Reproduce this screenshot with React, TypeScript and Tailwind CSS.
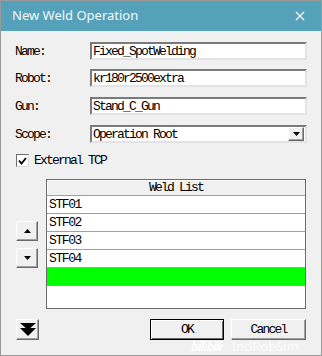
import React from 'react';

const mono = { fontFamily: '"Liberation Mono", "Noto Sans CJK SC", monospace' };

const sunken =
  'border-2 border-t-[#7a7a7a] border-l-[#7a7a7a] border-r-[#e3e3e3] border-b-[#e3e3e3] bg-white';
const raised =
  'border border-t-white border-l-white border-r-[#696969] border-b-[#696969] shadow-[inset_-1px_-1px_0_#a0a0a0] bg-[#f0f0f0]';
const txt = 'text-[13px] tracking-[-1.8px] text-black leading-none';

function Field({ label, value, className }: { label: string; value: string; className?: string }) {
  return (
    <div className={'flex items-center h-[18px] ' + (className || '')}>
      <span className={'w-[75px] ' + txt}>{label}</span>
      <div className={sunken + ' w-[217px] h-[18px] flex items-center pl-[1px] ' + txt}>{value}</div>
    </div>
  );
}

function Tri({ dir }: { dir: 'up' | 'down' }) {
  return (
    <svg width="7" height="4" viewBox="0 0 7 4">
      {dir === 'up' ? <polygon points="3.5,0 7,4 0,4" fill="#000" /> : <polygon points="0,0 7,0 3.5,4" fill="#000" />}
    </svg>
  );
}

export default function App() {
  const rows = ['STF01', 'STF02', 'STF03', 'STF04'];
  return (
    <div
      className="w-[322px] h-[356px] bg-[#f0f0f0] border border-[#9a9a9a] relative overflow-hidden flex flex-col"
      style={mono}
    >
      {/* title bar */}
      <div className="h-[30px] bg-[#55a1b9] flex items-center justify-between pl-[11px] pr-[16px] shrink-0">
        <span className="text-[13px] text-[#f4f8fa]" style={{ fontFamily: '"Noto Sans", "Open Sans", sans-serif' }}>
          New Weld Operation
        </span>
        <svg width="10" height="10" viewBox="0 0 10 10">
          <path d="M1 1 L9 9 M9 1 L1 9" stroke="#fff" strokeWidth="1.3" />
        </svg>
      </div>

      <div className="flex flex-col pl-[14px] pt-[11px]">
        <Field label="Name:" value="Fixed_SpotWelding" />
        <Field label="Robot:" value="kr180r2500extra" className="mt-[9px]" />
        <Field label="Gun:" value="Stand_C_Gun" className="mt-[10px]" />

        <div className="flex items-center h-[18px] mt-[10px]">
          <span className={'w-[75px] ' + txt}>Scope:</span>
          <div className={sunken + ' w-[217px] h-[18px] flex items-center justify-between pl-[1px] ' + txt}>
            <span>Operation Root</span>
            <div className={raised + ' w-[16px] h-[14px] flex items-center justify-center mr-[1px]'}>
              <Tri dir="down" />
            </div>
          </div>
        </div>

        <div className="flex items-center mt-[11px] ml-[1px] h-[13px]">
          <div className="w-[13px] h-[13px] bg-white border border-t-[#6d6d6d] border-l-[#6d6d6d] border-r-[#dcdcdc] border-b-[#dcdcdc] flex items-center justify-center">
            <svg width="9" height="8" viewBox="0 0 9 8">
              <path d="M1 3.5 L3.5 6.5 L8 1" stroke="#000" strokeWidth="1.8" fill="none" />
            </svg>
          </div>
          <span className={'ml-[5px] ' + txt}>External TCP</span>
        </div>

        {/* list area */}
        <div className="flex mt-[12px]">
          <div className="w-[31px] flex flex-col pl-[1px] pt-[42px] gap-[7px]">
            <div className={raised + ' w-[22px] h-[20px] flex items-center justify-center'}>
              <Tri dir="up" />
            </div>
            <div className={raised + ' w-[22px] h-[20px] flex items-center justify-center'}>
              <Tri dir="down" />
            </div>
          </div>
          <div className="w-[260px] h-[130px] border border-[#6b6b6b] bg-white flex flex-col">
            <div className={'h-[16px] border-b border-[#a0a0a0] bg-[#f0f0f0] shadow-[inset_1px_1px_0_#fff] flex items-center justify-center ' + txt}>
              Weld List
            </div>
            {rows.map((r) => (
              <div
                key={r}
                className="h-[18px] border-b border-[#a0a0a0] flex items-center pl-[2px] text-[13px] tracking-[-1.4px] leading-none"
              >
                {r}
              </div>
            ))}
            <div className="h-[18px] border-b border-[#a0a0a0] bg-[#00ff00]" />
          </div>
        </div>

        {/* bottom buttons */}
        <div className="flex items-center mt-[10px] pl-[1px]">
          <div className={raised + ' w-[23px] h-[21px] flex items-center justify-center'}>
            <svg width="16" height="13" viewBox="0 0 16 13">
              <polygon points="0,0 16,0 8,7" fill="#000" />
              <polygon points="0,5 16,5 8,13" fill="#000" />
            </svg>
          </div>
          <button className={'ml-[111px] w-[74px] h-[21px] border border-black bg-[#f0f0f0] shadow-[inset_1px_1px_0_#fff,inset_-1px_-1px_0_#696969] ' + txt}>
            OK
          </button>
          <button className={raised + ' ml-[7px] w-[75px] h-[21px] ' + txt}>Cancel</button>
        </div>
      </div>

      {/* watermark */}
      <div
        className="absolute left-[190px] top-[339px] flex items-end gap-[10px] text-white/80 pointer-events-none leading-none"
        style={{ fontFamily: '"Noto Sans", sans-serif' }}
      >
        <span className="text-[13px] leading-none font-bold italic tracking-[-1px]">bilibili</span>
        <span className="text-[13px] leading-none">IndRobSim</span>
      </div>
    </div>
  );
}
